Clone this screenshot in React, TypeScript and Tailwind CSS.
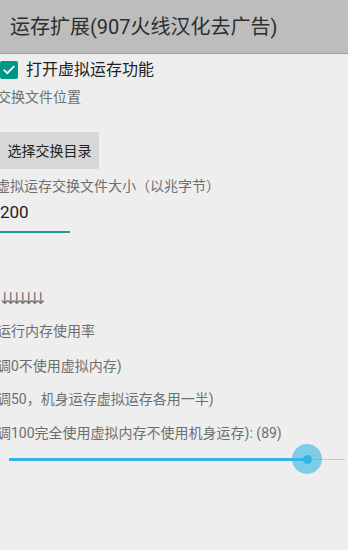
export default function App() {
  const font = { fontFamily: 'Roboto, "Noto Sans CJK SC", sans-serif' }

  return (
    <div className="w-[348px] h-[550px] overflow-hidden bg-[#eeeeee]" style={font}>
      {/* Action bar */}
      <div className="h-[54px] bg-[#bdbdbd] border-b border-[#9e9e9e] flex items-center pl-[10px]">
        <span className="text-[20px] text-[#2e2e2e] leading-none">运存扩展(907火线汉化去广告)</span>
      </div>

      <div className="flex flex-col">
        {/* Checkbox */}
        <div className="h-[32px] flex items-center gap-[8px]">
          <div className="w-[18px] h-[18px] rounded-[2px] bg-[#009688] flex items-center justify-center">
            <svg width="14" height="14" viewBox="0 0 24 24" fill="none">
              <path d="M4 12.5l5 5L20 6.5" stroke="#ffffff" strokeWidth="3" strokeLinecap="square" />
            </svg>
          </div>
          <span className="text-[16px] text-[#222222] leading-none">打开虚拟运存功能</span>
        </div>

        <div className="h-[22px] flex items-center -ml-[3px] text-[14px] text-[#6e6e6e] leading-none">交换文件位置</div>

        <button className="mt-[24px] w-[99px] h-[37px] bg-[#d6d7d7] rounded-[2px] flex items-center justify-center text-[14px] text-[#222222] leading-none">
          选择交换目录
        </button>

        <div className="mt-[6px] h-[22px] flex items-center -ml-[4px] text-[14px] text-[#6e6e6e] leading-none whitespace-nowrap">
          虚拟运存交换文件大小（以兆字节）
        </div>

        <div className="h-[30px] flex items-center text-[17px] text-[#222222] leading-none">200</div>
        <div className="mt-[4px] w-[70px] h-[2px] bg-[#1f9a90]" />

        <div className="mt-[56px] -ml-[2px] h-[20px] flex items-center text-[16px] text-[#777777] leading-none tracking-[-7.4px]" style={{ fontFamily: '"DejaVu Sans", sans-serif' }}>
          ↓↓↓↓↓↓↓
        </div>

        <div className="mt-[11px] h-[22px] flex items-center -ml-[3px] text-[14px] text-[#6e6e6e] leading-none">运行内存使用率</div>
        <div className="mt-[13px] h-[22px] flex items-center -ml-[3px] text-[14px] text-[#6e6e6e] leading-none">调0不使用虚拟内存)</div>
        <div className="mt-[11px] h-[22px] flex items-center -ml-[3px] text-[14px] text-[#6e6e6e] leading-none whitespace-nowrap">调50，机身运存虚拟运存各用一半)</div>
        <div className="mt-[12px] h-[22px] flex items-center -ml-[3px] text-[14px] text-[#6e6e6e] leading-none whitespace-nowrap">调100完全使用虚拟内存不使用机身运存): (89)</div>

        {/* Slider */}
        <div className="relative h-[30px] flex items-center pl-[9px] pr-[3px]">
          <div className="w-[298px] h-[3px] bg-[#33b5e5]" />
          <div className="flex-1 h-[1px] bg-[#c9c9c9]" />
          <div className="absolute left-[292px] top-0 w-[30px] h-[30px] rounded-full bg-[#33b5e5]/60 flex items-center justify-center">
            <div className="w-[9px] h-[9px] rounded-full bg-[#33b5e5]" />
          </div>
        </div>
      </div>
    </div>
  )
}
